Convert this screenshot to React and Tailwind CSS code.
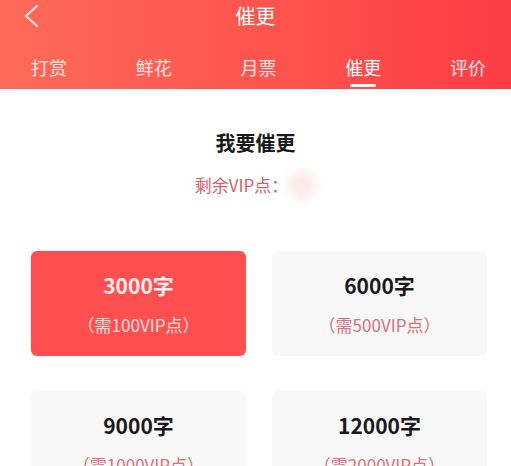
export default function App() {
  const tabs = ["打赏", "鲜花", "月票", "催更", "评价"];
  const items = [
    { w: "3000字", p: "（需100VIP点）", active: true },
    { w: "6000字", p: "（需500VIP点）" },
    { w: "9000字", p: "（需1000VIP点）" },
    { w: "12000字", p: "（需2000VIP点）" },
  ];
  return (
    <div
      className="w-[511px] h-[466px] overflow-hidden bg-white"
      style={{ fontFamily: '"Noto Sans CJK SC", "Noto Sans", sans-serif' }}
    >
      <div className="h-[89px] bg-gradient-to-r from-[#fd6a58] to-[#fc3b45] text-white">
        <div className="relative h-[32px] flex items-center justify-center">
          <svg className="absolute left-[22px] top-[4px]" width="18" height="24" viewBox="0 0 18 24" fill="none">
            <path d="M15 2 L4 12 L15 22" stroke="white" strokeOpacity="0.85" strokeWidth="2" strokeLinecap="round" strokeLinejoin="round" />
          </svg>
          <span className="text-[20px] leading-none">催更</span>
        </div>
        <div className="flex justify-between pl-[31px] pr-[25px] pt-[20px]">
          {tabs.map((t) => (
            <div key={t} className="relative flex flex-col items-center">
              <span className={`text-[18px] leading-[30px] ${t === "催更" ? "text-white" : "text-white/85"}`}>{t}</span>
              {t === "催更" && <div className="absolute top-[32px] w-[26px] h-[3px] rounded-full bg-white" />}
            </div>
          ))}
        </div>
      </div>
      <div className="flex flex-col items-center pt-[40px]">
        <div className="text-[20px] font-bold leading-[28px] text-[#1a1a1a]">我要催更</div>
        <div className="flex items-center mt-[14px] text-[17px] leading-[24px] text-[#d9606a]">
          <span>剩余VIP点：</span>
          <span className="w-[28px] h-[28px] rounded-full bg-[#fdeaea] blur-[5px]" />
        </div>
      </div>
      <div className="grid grid-cols-2 gap-x-[26px] gap-y-[35px] px-[31px] pt-[52px] pr-[24px]">
        {items.map((it) => (
          <div
            key={it.w}
            className={`h-[105px] rounded-[6px] flex flex-col items-center justify-center ${
              it.active ? "bg-[#fd4f4f]" : "bg-[#f8f8f8]"
            }`}
          >
            <div className={`text-[21px] font-bold leading-[28px] ${it.active ? "text-white/90" : "text-[#1a1a1a]"}`}>{it.w}</div>
            <div className={`mt-[15px] text-[17px] leading-[22px] ${it.active ? "text-white/80" : "text-[#d9707a]"}`}>{it.p}</div>
          </div>
        ))}
      </div>
    </div>
  );
}
